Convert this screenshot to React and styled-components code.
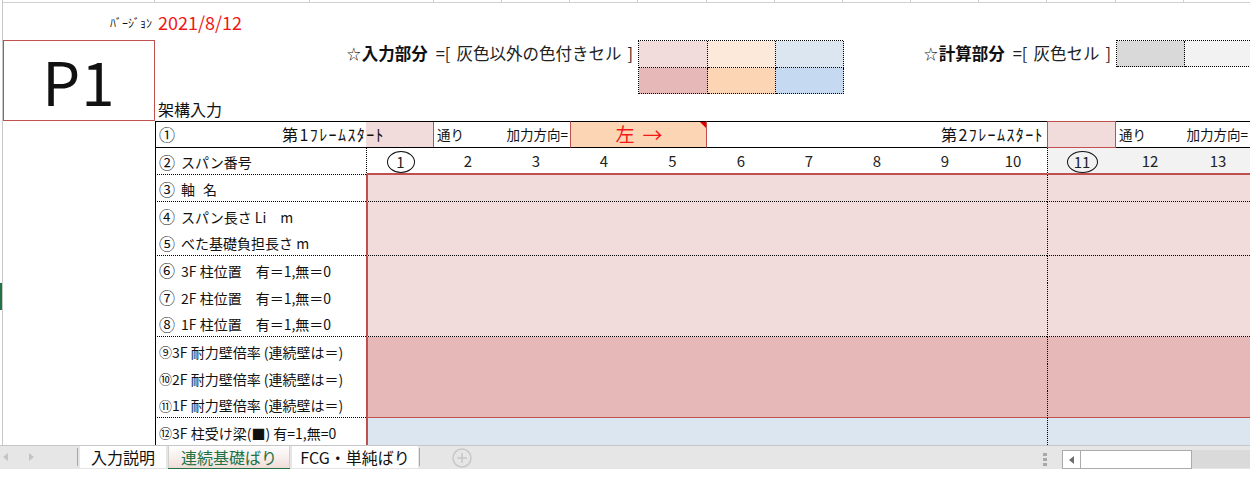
import React from 'react';
import styled, { createGlobalStyle } from 'styled-components';

const RED = '#c0504d';
const PINK = '#f2dcdb';
const PINK2 = '#e6b8b7';
const ORANGE1 = '#fde9d9';
const ORANGE2 = '#fcd5b4';
const BLUE1 = '#dce6f1';
const BLUE2 = '#c5d9f1';
const GRAY1 = '#d9d9d9';
const GRAY2 = '#f2f2f2';
const TEXTRED = '#f01818';
const COLS = '152px 211px repeat(4, 68px) 69px repeat(5, 68px) 69px 68px 68px';
const STRIP_COLS = '152px 155px 124px 68px 68px 68px 69px 68px 68px 68px 68px 68px 69px 68px 68px';

const Global = createGlobalStyle`
  html, body { margin: 0; padding: 0; background: #fff; }
  body { font-family: "Noto Sans CJK JP", "Noto Sans", sans-serif; color: #111; }
  * { box-sizing: border-box; }
`;

const Page = styled.div`
  width: 1250px;
  height: 479px;
  overflow: hidden;
  display: flex;
  flex-direction: column;
  background: #fff;
`;

const Sheet = styled.div`
  display: flex;
  height: 445px;
  flex: none;
`;

const Gutter = styled.div`
  width: 3px;
  flex: none;
  border-right: 1px solid #c8c8c8;
  background: linear-gradient(to bottom, transparent 283px, #217346 283px, #217346 310px, transparent 310px);
`;

const Main = styled.div`
  flex: 1;
  min-width: 0;
  display: flex;
  flex-direction: column;
  overflow: hidden;
`;

const Grid = styled.div`
  display: grid;
  grid-template-columns: ${(p) => p.$cols || COLS};
  grid-template-rows: ${(p) => p.$rows};
  flex: none;
`;

const Tick = styled.div`
  border-right: 1px solid #d0d0d0;
  border-bottom: 1px solid #d0d0d0;
`;

const Place = styled.div`
  grid-column: ${(p) => p.$col};
  grid-row: ${(p) => p.$row || 1};
  display: flex;
  align-items: center;
  min-width: 0;
  white-space: pre;
  line-height: 1.2;
`;

const VersionLabel = styled(Place)`
  justify-content: flex-end;
  padding: 3px 3px 0 0;
  font-size: 12px;
`;

const VersionDate = styled(Place)`
  padding: 2px 0 0 3px;
  font-size: 18px;
  color: ${TEXTRED};
`;

const P1Box = styled(Place)`
  justify-content: center;
  border: 1px solid ${RED};
  font-size: 60px;
  font-weight: 400;
  letter-spacing: 1px;
  padding-bottom: 2px;
`;

const LegendText = styled(Place)`
  justify-content: flex-end;
  padding-right: ${(p) => p.$pad || 5}px;
  font-size: 16.5px;
  color: #222;
`;

const Star = styled.span`
  font-size: 14px;
  margin-right: 1px;
`;

const Strong = styled.b`
  font-weight: 700;
  color: #111;
  margin-right: 8px;
`;

const Bracket = styled.span`
  margin: 0 ${(p) => p.$r || 0}px 0 ${(p) => p.$l || 0}px;
`;

const Swatches = styled.div`
  grid-column: ${(p) => p.$col};
  grid-row: ${(p) => p.$row};
  display: grid;
  grid-template-columns: ${(p) => p.$cols};
  grid-auto-rows: 1fr;
  border-top: 1px dotted #000;
  border-left: 1px dotted #000;
`;

const Swatch = styled.div`
  background: ${(p) => p.$bg};
  border-right: 1px dotted #000;
  border-bottom: 1px dotted #000;
`;

const SectionTitle = styled(Place)`
  padding: 4px 0 0 3px;
  font-size: 16px;
`;

/* ---- table ---- */

const R1Cell = styled(Place)`
  border-top: 1px solid #000;
  border-bottom: 1px solid #000;
  font-size: 13.5px;
  padding: 0 ${(p) => (p.$padR != null ? p.$padR : 3)}px 0 3px;
  justify-content: ${(p) => p.$justify || 'flex-start'};
  background: ${(p) => p.$bg || 'transparent'};
  ${(p) => (p.$leftBlack ? 'border-left: 1px solid #000;' : '')}
`;

const R1Pink = styled(R1Cell)`
  background: ${PINK};
  border-right: 1px solid ${RED};
  ${(p) => (p.$boxed ? `border: 1px solid ${RED};` : '')}
`;

const FrameStart = styled.span`
  font-size: 16px;
  letter-spacing: 1.4px;
  margin-right: ${(p) => p.$mr || 0}px;
`;

const Direction = styled(R1Cell)`
  position: relative;
  background: ${ORANGE2};
  border-left: 1px solid ${RED};
  border-right: 1px solid ${RED};
  justify-content: center;
  gap: 8px;
  color: ${TEXTRED};
  font-size: 19px;
  padding-left: 4px;
`;

const Arrow = styled.span`
  font-size: 20px;
`;

const CommentMark = styled.span`
  position: absolute;
  top: 0;
  right: 0;
  width: 0;
  height: 0;
  border-top: 6px solid #e00000;
  border-left: 6px solid transparent;
`;

const Circ = styled.span`
  font-size: ${(p) => (p.$small ? 13 : 16)}px;
  margin-right: ${(p) => (p.$small ? 0 : 6)}px;
`;

const LabelCell = styled(Place)`
  border-left: 1px solid #000;
  border-bottom: ${(p) => (p.$dot ? '1px dotted #000' : 'none')};
  padding: 3px 0 0 3px;
  font-size: 14px;
  color: #111;
`;

const Gap = styled.span`
  display: inline-block;
  width: ${(p) => p.$w}px;
`;

const NumCell = styled(Place)`
  justify-content: center;
  font-size: 15px;
  color: #222;
  background: ${(p) => (p.$gray ? GRAY2 : '#fff')};
  border-bottom: 2px solid ${RED};
  ${(p) => (p.$dotLeft ? 'border-left: 1px dotted #000;' : '')}
`;

const Ring = styled.span`
  display: inline-flex;
  align-items: center;
  justify-content: center;
  width: ${(p) => (p.$wide ? 31 : 28)}px;
  height: 22px;
  margin-top: 2px;
  border: 1px solid #111;
  border-radius: 50%;
`;

const DataCell = styled(Place)`
  background: ${(p) => p.$bg};
  border-left: ${(p) => (p.$main ? `2px solid ${RED}` : '1px dotted #000')};
  border-bottom: ${(p) =>
    p.$line === 'dot' ? '1px dotted #000' : p.$line === 'red' ? `1px solid ${RED}` : 'none'};
`;

/* ---- tab bar ---- */

const TabBar = styled.div`
  height: 24px;
  flex: none;
  display: flex;
  align-items: flex-start;
  background: #e6e6e6;
  border-top: 1px solid #c6c6c6;
`;

const NavArrows = styled.div`
  width: 77px;
  height: 22px;
  display: flex;
  align-items: center;
  padding-left: 3px;
  gap: 21px;
`;

const Sep = styled.div`
  width: 1px;
  height: 18px;
  margin: 2px ${(p) => (p.$mr != null ? p.$mr : 2)}px 0 ${(p) => p.$ml || 0}px;
  background: #a6a6a6;
`;

const Tab = styled.div`
  width: ${(p) => p.$w}px;
  height: ${(p) => (p.$active ? 24 : 22)}px;
  margin-right: 2px;
  display: flex;
  align-items: center;
  justify-content: center;
  font-size: 16px;
  line-height: 1;
  padding-bottom: ${(p) => (p.$active ? 1 : 0)}px;
  color: ${(p) => (p.$active ? '#217346' : '#111')};
  background: ${(p) => (p.$active ? 'linear-gradient(to bottom, #ffffff 0%, #f6ecea 60%, #efdcd8 100%)' : '#fff')};
  border-bottom: ${(p) => (p.$active ? '2px solid #217346' : 'none')};
  ${(p) => (p.$active ? 'box-shadow: inset 1px 0 0 #d0d0d0, inset -1px 0 0 #d0d0d0;' : '')}
`;

const AddBtn = styled.div`
  margin: 2px 0 0 32px;
  width: 20px;
  height: 20px;
  display: flex;
`;

const RightGroup = styled.div`
  margin-left: auto;
  display: flex;
  align-items: flex-start;
`;

const Dots = styled.div`
  width: 4px;
  margin: 7px 15px 0 0;
  display: flex;
  flex-direction: column;
  gap: 2px;
`;

const Dot = styled.span`
  width: 4px;
  height: 3px;
  background: #a8a8a8;
`;

const HScroll = styled.div`
  display: flex;
  width: 130px;
  height: 19px;
  margin-top: 4px;
  border: 1px solid #ababab;
  background: #fff;
`;

const ScrollBtn = styled.div`
  width: 18px;
  border-right: 1px solid #ababab;
  display: flex;
  align-items: center;
  justify-content: center;
`;

const Track = styled.div`
  width: 58px;
  height: 18px;
  margin-top: 4px;
  background: #dadada;
`;

const Bottom = styled.div`
  flex: 1;
  background: #fff;
`;

const labelRows = [
  { c: '③', t: ['軸', '名'], bg: PINK, line: 'dot' },
  { c: '④', t: 'スパン長さ Li　m', bg: PINK },
  { c: '⑤', t: 'べた基礎負担長さ m', bg: PINK, line: 'dot' },
  { c: '⑥', t: '3F 柱位置　有＝1,無＝0', bg: PINK },
  { c: '⑦', t: '2F 柱位置　有＝1,無＝0', bg: PINK },
  { c: '⑧', t: '1F 柱位置　有＝1,無＝0', bg: PINK, line: 'dot' },
  { c: '⑨', t: '3F 耐力壁倍率 (連続壁は＝)', bg: PINK2, small: true },
  { c: '⑩', t: '2F 耐力壁倍率 (連続壁は＝)', bg: PINK2, small: true },
  { c: '⑪', t: '1F 耐力壁倍率 (連続壁は＝)', bg: PINK2, small: true, line: 'red' },
  { c: '⑫', t: '3F 柱受け梁(■) 有=1,無=0', bg: BLUE1, small: true },
];

export default function App() {
  const stripCells = Array.from({ length: 15 }, (_, i) => <Tick key={i} />);
  const nums = Array.from({ length: 13 }, (_, i) => i + 1);

  return (
    <Page>
      <Global />
      <Sheet>
        <Gutter />
        <Main>
          <Grid $cols={STRIP_COLS} $rows="3px">{stripCells}</Grid>

          <Grid $rows="37px 27px 27px 27px">
            <VersionLabel $col="1" $row="1">ﾊﾞｰｼﾞｮﾝ</VersionLabel>
            <VersionDate $col="2 / 4" $row="1">2021/8/12</VersionDate>
            <P1Box $col="1" $row="2 / 5">P1</P1Box>

            <LegendText $col="2 / 7" $row="2">
              <Star>☆</Star>
              <Strong>入力部分</Strong>
              <Bracket $r={6}>=[</Bracket>
              灰色以外の色付きセル
              <Bracket $l={6}>]</Bracket>
            </LegendText>
            <Swatches $col="7 / 10" $row="2 / 4" $cols="69px 68px 68px">
              <Swatch $bg={PINK} />
              <Swatch $bg={ORANGE1} />
              <Swatch $bg={BLUE1} />
              <Swatch $bg={PINK2} />
              <Swatch $bg={ORANGE2} />
              <Swatch $bg={BLUE2} />
            </Swatches>

            <LegendText $col="10 / 14" $row="2" $pad={5}>
              <Star>☆</Star>
              <Strong>計算部分</Strong>
              <Bracket $r={6}>=[</Bracket>
              灰色セル
              <Bracket $l={6}>]</Bracket>
            </LegendText>
            <Swatches $col="14 / 16" $row="2" $cols="68px 68px">
              <Swatch $bg={GRAY1} />
              <Swatch $bg={GRAY2} />
            </Swatches>

            <SectionTitle $col="2 / 5" $row="4">架構入力</SectionTitle>
          </Grid>

          {/* row 1 */}
          <Grid $rows="27px">
            <R1Pink $col="3" />
            <R1Cell $col="2 / 4" $leftBlack $justify="space-between">
              <Circ>①</Circ>
              <FrameStart $mr={46}>第1ﾌﾚｰﾑｽﾀｰﾄ</FrameStart>
            </R1Cell>
            <R1Cell $col="4 / 6" $justify="space-between" $padR={2}>
              <span>通り</span>
              <span>加力方向=</span>
            </R1Cell>
            <Direction $col="6 / 8">
              <span>左</span>
              <Arrow>→</Arrow>
              <CommentMark />
            </Direction>
            <R1Cell $col="8 / 13" $justify="flex-end">
              <FrameStart>第2ﾌﾚｰﾑｽﾀｰﾄ</FrameStart>
            </R1Cell>
            <R1Pink $col="13" $boxed />
            <R1Cell $col="14 / 16" $justify="space-between" $padR={4}>
              <span>通り</span>
              <span>加力方向=</span>
            </R1Cell>
          </Grid>

          {/* row 2 */}
          <Grid $rows="27px">
            <LabelCell $col="2" $dot>
              <Circ>②</Circ>スパン番号
            </LabelCell>
            {nums.map((n) => (
              <NumCell key={n} $col={`${n + 2}`} $gray={n >= 11} $dotLeft={n === 1 || n === 11}>
                {n === 1 || n === 11 ? <Ring $wide={n === 11}>{n}</Ring> : n}
              </NumCell>
            ))}
          </Grid>

          {labelRows.map((r) => (
            <Grid $rows="27px" key={r.c}>
              <LabelCell $col="2" $dot={!!r.line}>
                <Circ $small={r.small}>{r.c}</Circ>
                {Array.isArray(r.t) ? (
                  <>
                    {r.t[0]}
                    <Gap $w={8} />
                    {r.t[1]}
                  </>
                ) : (
                  r.t
                )}
              </LabelCell>
              <DataCell $col="3 / 13" $bg={r.bg} $main $line={r.line} />
              <DataCell $col="13 / 16" $bg={r.bg} $line={r.line} />
            </Grid>
          ))}
        </Main>
      </Sheet>

      <TabBar>
        <NavArrows>
          <svg width="5" height="8" viewBox="0 0 5 8">
            <path d="M5 0 L0 4 L5 8 Z" fill="#c4c4c4" />
          </svg>
          <svg width="5" height="8" viewBox="0 0 5 8">
            <path d="M0 0 L5 4 L0 8 Z" fill="#c4c4c4" />
          </svg>
        </NavArrows>
        <Sep />
        <Tab $w={86}>入力説明</Tab>
        <Tab $w={122} $active>連続基礎ばり</Tab>
        <Tab $w={126}>FCG・単純ばり</Tab>
        <Sep $ml={-1} $mr={0} />
        <AddBtn>
          <svg width="20" height="20" viewBox="0 0 20 20">
            <circle cx="10" cy="10" r="9" fill="none" stroke="#c8c8c8" strokeWidth="1.5" />
            <path d="M10 5 V15 M5 10 H15" stroke="#c8c8c8" strokeWidth="1.5" />
          </svg>
        </AddBtn>
        <RightGroup>
          <Dots>
            <Dot />
            <Dot />
            <Dot />
          </Dots>
          <HScroll>
            <ScrollBtn>
              <svg width="5" height="8" viewBox="0 0 5 8">
                <path d="M5 0 L0 4 L5 8 Z" fill="#6e6e6e" />
              </svg>
            </ScrollBtn>
          </HScroll>
          <Track />
        </RightGroup>
      </TabBar>
      <Bottom />
    </Page>
  );
}
